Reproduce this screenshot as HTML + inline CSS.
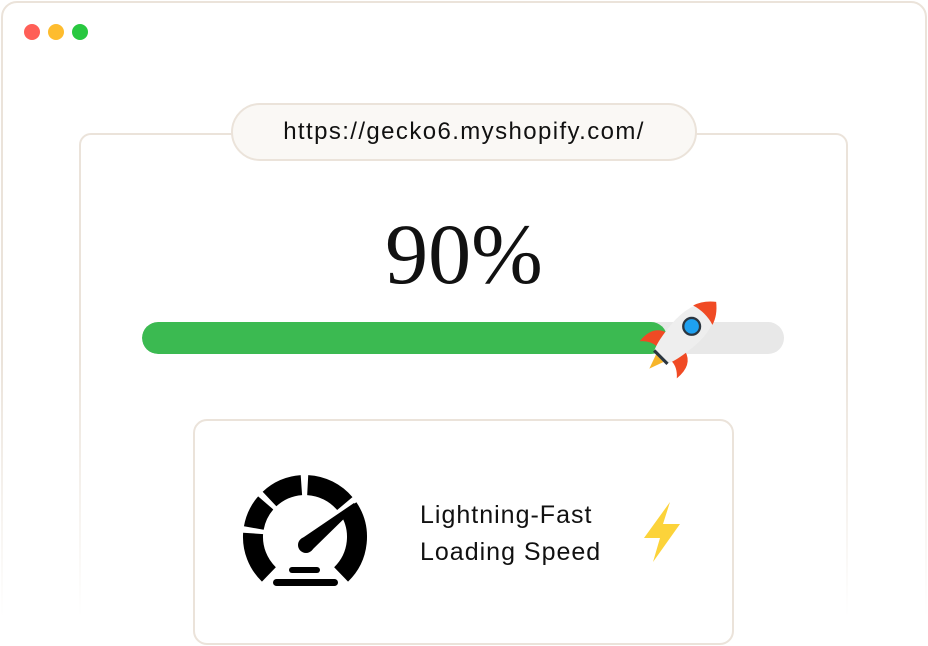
<!DOCTYPE html>
<html><head><meta charset="utf-8"><style>
html,body{margin:0;padding:0;background:#fff;width:928px;height:646px;overflow:hidden;}
body{position:relative;font-family:"Liberation Sans",sans-serif;}
.win{position:absolute;left:1px;top:1px;width:926px;height:660px;border:2px solid #ebe3da;border-radius:16px;box-sizing:border-box;}
.dot{position:absolute;top:24px;width:16px;height:16px;border-radius:50%;}
.inner{position:absolute;left:79px;top:133px;width:769px;height:530px;border:2px solid #ebe3da;border-radius:12px;box-sizing:border-box;}
.fade{position:absolute;left:0;top:360px;width:928px;height:286px;background:linear-gradient(to bottom,rgba(255,255,255,0),#fff 90%);}
.pill{position:absolute;left:231px;top:103px;width:466px;height:58px;border:2px solid #ebe3da;border-radius:29px;background:#faf8f5;box-sizing:border-box;text-align:center;line-height:54px;font-size:24px;color:#111;letter-spacing:1.4px;}
.pct{position:absolute;left:0;width:928px;top:206px;text-align:center;font-family:"Liberation Serif",serif;font-size:86px;line-height:96px;color:#111;}
.bar{position:absolute;left:142px;top:322px;width:642px;height:32px;border-radius:16px;background:#e8e8e8;overflow:hidden;}
.fill{position:absolute;left:0;top:0;height:32px;width:525px;background:#3bba51;border-radius:16px;}
.card{position:absolute;left:193px;top:419px;width:541px;height:226px;border:2px solid #ebe3da;border-radius:14px;box-sizing:border-box;background:#fff;}
.txt{position:absolute;left:420px;top:497px;font-size:25px;line-height:37px;color:#111;letter-spacing:1px;}
</style></head><body>
<div class="win"></div>
<div class="dot" style="left:24px;background:#ff5f57"></div>
<div class="dot" style="left:48px;background:#febc2e"></div>
<div class="dot" style="left:72px;background:#28c840"></div>
<div class="inner"></div>
<div class="fade"></div>
<div class="pill">https://gecko6.myshopify.com/</div>
<div class="pct">90%</div>
<div class="bar"><div class="fill"></div></div>
<div class="card"></div>
<div class="txt">Lightning-Fast<br>Loading Speed</div>
<svg width="928" height="646" style="position:absolute;left:0;top:0">
  <g fill="none" stroke="#000" stroke-width="20">
    <path d="M268.9 574.4 A52 52 0 0 1 253.1 533.4"/>
    <path d="M253.8 528 A52 52 0 0 1 265.7 502.9"/>
    <path d="M269.5 499 A52 52 0 0 1 301.4 485.1"/>
    <path d="M307.7 485.1 A52 52 0 0 1 344.8 503.6"/>
    <path d="M348.1 507.9 A52 52 0 0 1 341.1 574.4"/>
  </g>
  <polygon points="311,551 301,539 354,503 357,506" fill="#000"/>
  <circle cx="306" cy="545" r="8" fill="#000"/>
  <rect x="289" y="567" width="31" height="6" rx="3" fill="#000"/>
  <rect x="273" y="579" width="65" height="7" rx="3.5" fill="#000"/>
  <polygon points="670,502 644,538 660,538 653,562 680,524 663,524" fill="#fcd33a"/>
  <g transform="translate(682,336) rotate(45) scale(1.05)">
    <path d="M-5 30 L0 44 L5 30 Z" fill="#f7b52a"/>
    <path d="M-12 8 Q-27 12 -25 32 Q-18 24 -10 24 Z" fill="#f04a24"/>
    <path d="M12 8 Q27 12 25 32 Q18 24 10 24 Z" fill="#f04a24"/>
    <path d="M0 -46 Q18 -30 15 0 Q13 20 9 28 L-9 28 Q-13 20 -15 0 Q-18 -30 0 -46 Z" fill="#eeeeee"/>
    <path d="M0 -46 Q10 -38 13 -28 Q0 -32 -13 -28 Q-10 -38 0 -46 Z" fill="#f04a24"/>
    <rect x="-9" y="27" width="18" height="3" fill="#2b3640"/>
    <circle cx="0" cy="-13" r="8" fill="#1ea0f0" stroke="#2b3640" stroke-width="2.2"/>
  </g>
</svg>
</body></html>
